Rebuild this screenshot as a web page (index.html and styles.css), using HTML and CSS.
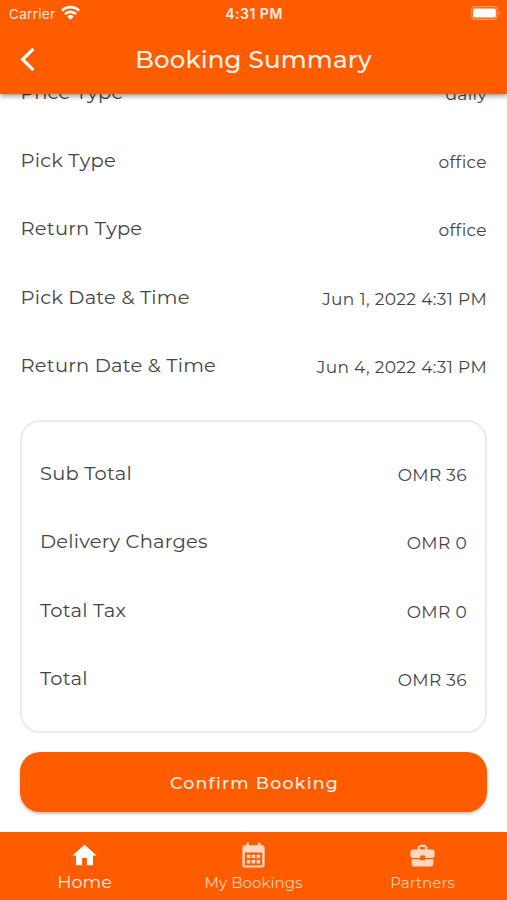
FILE: index.html
```html
<!DOCTYPE html>
<html lang="en">
<head>
<meta charset="utf-8">
<title>Booking Summary</title>
<link rel="stylesheet" href="styles.css">
</head>
<body>
<div class="screen">
  <header class="header">
    <div class="status">
      <div class="carrier"><span>Carrier</span>
        <svg class="wifi" viewBox="0 0 18 14"><g fill="none" stroke="currentColor" stroke-width="2.5"><path d="M.9 5.2a11.5 11.5 0 0 1 16.2 0"/><path d="M3.8 8.5a7.4 7.4 0 0 1 10.4 0"/></g><path fill="currentColor" d="M9 13.8 5.9 10.7a4.4 4.4 0 0 1 6.2 0z"/></svg>
      </div>
      <span class="clock">4:31 PM</span>
      <svg class="battery" viewBox="0 0 30 14"><rect x=".7" y=".7" width="25.6" height="12.6" rx="3.5" fill="none" stroke="#fff" stroke-opacity=".4" stroke-width="1.2"/><rect x="2.2" y="2.4" width="22.6" height="9.2" rx="1.5" fill="#fff"/><path d="M27.7 4.8a2.6 2.6 0 0 1 0 4.4z" fill="#fff" fill-opacity=".45"/></svg>
    </div>
    <div class="titlebar">
      <svg class="back" viewBox="0 0 16 26"><path d="M13.4 1.8 2.6 12.5l10.8 10.7" fill="none" stroke="currentColor" stroke-width="3.2"/></svg>
      <h1 class="title">Booking Summary</h1>
    </div>
  </header>

  <main class="content">
    <div class="details">
      <div class="row"><span class="label">Price Type</span><span class="value">daily</span></div>
      <div class="row"><span class="label">Pick Type</span><span class="value">office</span></div>
      <div class="row"><span class="label">Return Type</span><span class="value">office</span></div>
      <div class="row"><span class="label">Pick Date &amp; Time</span><span class="value">Jun 1, 2022 4:31 PM</span></div>
      <div class="row"><span class="label">Return Date &amp; Time</span><span class="value">Jun 4, 2022 4:31 PM</span></div>
    </div>
    <section class="card">
      <div class="row"><span class="label">Sub Total</span><span class="value">OMR 36</span></div>
      <div class="row"><span class="label">Delivery Charges</span><span class="value">OMR 0</span></div>
      <div class="row"><span class="label">Total Tax</span><span class="value">OMR 0</span></div>
      <div class="row"><span class="label">Total</span><span class="value">OMR 36</span></div>
    </section>
    <button class="confirm">Confirm Booking</button>
  </main>

  <nav class="nav">
    <a class="tab active">
      <svg class="icon" viewBox="0 0 24 24"><path fill="currentColor" d="M10 20v-6h4v6h5v-8h3L12 3 2 12h3v8z"/></svg>
      <span>Home</span>
    </a>
    <a class="tab">
      <svg class="icon" viewBox="0 0 24 24"><path fill="currentColor" fill-rule="evenodd" d="M6.2 1.5h2v2h7.6v-2h2v2h1.4a2 2 0 0 1 2 2v14.500a2 2 0 0 1-2 2H4.800a2 2 0 0 1-2-2V5.500a2 2 0 0 1 2-2h1.400zM4.800 9.500V20.200h14.400V9.500zM6.500 11.300h2.900v2.900H6.500zm4.050 0h2.900v2.900h-2.900zm4.050 0h2.900v2.900h-2.900zM6.500 15.700h2.900v2.900H6.500zm4.050 0h2.900v2.900h-2.900zm4.050 0h2.900v2.900h-2.900z"/></svg>
      <span>My Bookings</span>
    </a>
    <a class="tab">
      <svg class="icon" viewBox="0 0 24 24"><path fill="currentColor" d="M10 16v-1H3.010L3 19c0 1.110.89 2 2 2h14c1.110 0 2-.89 2-2v-4h-7v1zm10-9h-4.010V5l-2-2h-4l-2 2v2H4c-1.100 0-2 .9-2 2v3c0 1.110.89 2 2 2h6v-2h4v2h6c1.100 0 2-.9 2-2V9c0-1.100-.9-2-2-2m-6 0h-4V5h4z"/></svg>
      <span>Partners</span>
    </a>
  </nav>
</div>
</body>
</html>
```
FILE: styles.css
```css
* { box-sizing: border-box; }
body {
  margin: 0;
  background: #fff;
  color: #444;
  font-family: Montserrat, Inter, "Open Sans", sans-serif;
}
.screen {
  display: flex;
  flex-direction: column;
  width: 507px;
  height: 900px;
  overflow: hidden;
}
.header {
  position: relative;
  z-index: 1;
  flex: 0 0 94px;
  background: #ff5c00;
  color: #fff;
  box-shadow: 0 2px 5px rgba(0, 0, 0, .42);
}
.status {
  display: grid;
  grid-template-columns: 1fr auto 1fr;
  align-items: center;
  height: 28px;
  padding: 0 6px 0 9px;
  font-family: Inter, sans-serif;
  font-size: 13.5px;
}
.carrier { display: flex; align-items: center; gap: 6px; color: #ffeadf; letter-spacing: .3px; }
.wifi { width: 19px; height: 15px; color: #fff; margin-top: -3px; }
.clock { font-weight: 600; font-size: 14px; letter-spacing: .5px; color: #fff0e8; margin: -2px 0 0 -2px; }
.battery { justify-self: end; width: 30px; height: 14px; margin-top: -2px; }
.titlebar {
  display: grid;
  grid-template-columns: 60px 1fr 60px;
  align-items: center;
  height: 64px;
}
.back { width: 16px; height: 26px; margin-left: 20px; }
.title {
  margin: -3px 0 0;
  text-align: center;
  font-size: 24.5px;
  font-weight: 500;
  letter-spacing: .2px;
  white-space: nowrap;
  color: #fff3eb;
}
.content { flex: 1; min-height: 0; padding: 0 20px; }
.details { margin-top: -35.6px; padding: 0 0 0 .5px; }
.row {
  display: flex;
  justify-content: space-between;
  align-items: center;
  height: 68.4px;
  white-space: nowrap;
}
.label { font-size: 19.5px; line-height: 24px; letter-spacing: .2px; margin-top: -2px; }
.value { font-size: 17px; line-height: 22px; letter-spacing: .35px; margin-top: 2px; }
.card {
  margin-top: 19.5px;
  padding: 18px 18px;
  border: 2px solid #ebebeb;
  border-radius: 20px;
}
.confirm {
  display: block;
  width: 100%;
  height: 60px;
  margin-top: 19px;
  padding: 1px 0 0 2px;
  border: 0;
  border-radius: 20px;
  background: #ff5c00;
  color: #fff0e5;
  font: 500 17.3px Montserrat, Inter, sans-serif;
  letter-spacing: 1.3px;
  box-shadow: 0 2px 3px rgba(70, 50, 0, .3);
}
.nav {
  flex: 0 0 68.5px;
  display: grid;
  grid-template-columns: repeat(3, 1fr);
  background: #ff5c00;
}
.tab {
  display: flex;
  flex-direction: column;
  align-items: center;
  padding-top: 10px;
  color: #ffcfb0;
  font-size: 15px;
  line-height: 24px;
  letter-spacing: .05px;
}
.tab .icon { width: 29px; height: 29px; margin-top: -1px; margin-bottom: 1px; color: #ffd8c2; }
.tab.active { font-size: 17.5px; line-height: 22px; }
.active .icon { color: #fff; }
.active span { color: #ffeadb; }
```
